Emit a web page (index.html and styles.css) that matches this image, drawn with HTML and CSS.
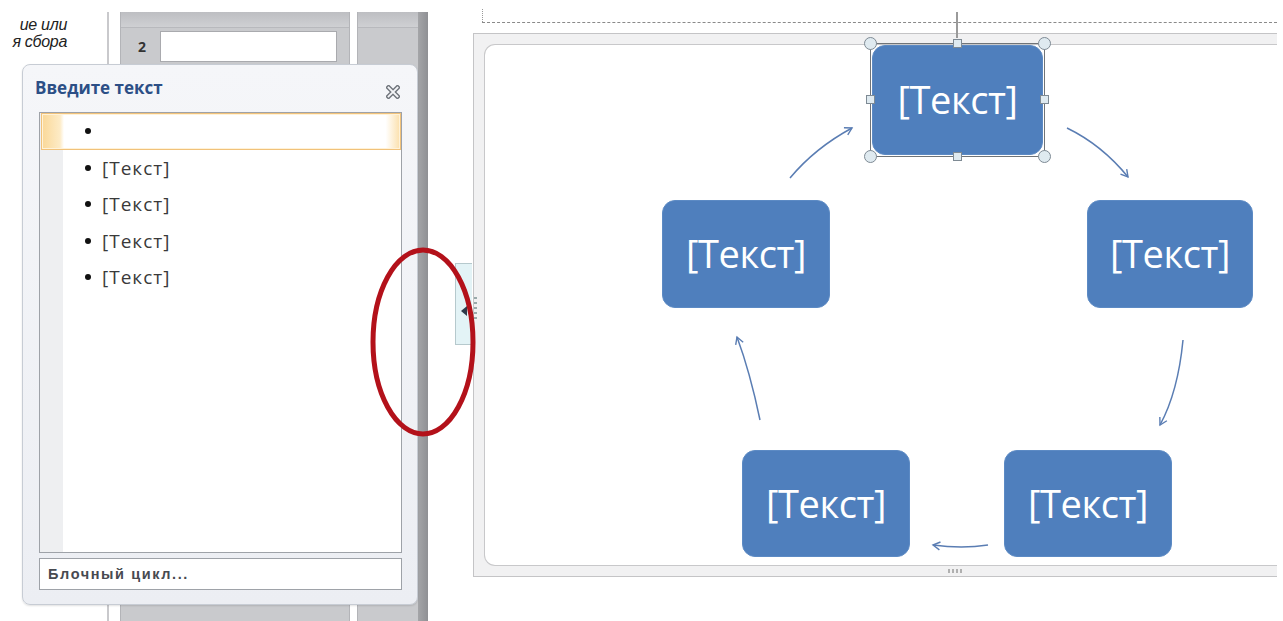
FILE: index.html
```html
<!DOCTYPE html>
<html lang="ru">
<head>
<meta charset="utf-8">
<title>SmartArt</title>
<link rel="stylesheet" href="styles.css">
</head>
<body>
<div class="page">
  <div class="left">
    <div class="snippet"><span>ие или</span><span>я сбора</span></div>
    <div class="col-line"></div>
    <div class="sheet">
      <div class="sheet-top"></div>
      <div class="sheet-row"><b class="num">2</b><div class="cell"></div></div>
    </div>
    <div class="sheet2"><div class="sheet-top"></div></div>
    <div class="scrollbar"></div>

    <div class="popup">
      <div class="popup-head">
        <span class="popup-title">Введите текст</span>
        <svg class="close" width="14" height="14" viewBox="0 0 14 14">
          <path d="M2.5 2.5 L11.5 11.5 M11.5 2.5 L2.5 11.5" stroke="#6f747b" stroke-width="4.6" stroke-linecap="square"/>
          <path d="M2.5 2.5 L11.5 11.5 M11.5 2.5 L2.5 11.5" stroke="#f4f5f8" stroke-width="1.8" stroke-linecap="square"/>
        </svg>
      </div>
      <div class="list">
        <div class="gutter"></div>
        <ul class="items">
          <li class="item active"><span class="dot"></span></li>
          <li class="item"><span class="dot"></span><span>[Текст]</span></li>
          <li class="item"><span class="dot"></span><span>[Текст]</span></li>
          <li class="item"><span class="dot"></span><span>[Текст]</span></li>
          <li class="item"><span class="dot"></span><span>[Текст]</span></li>
        </ul>
      </div>
      <div class="layout-name">Блочный цикл...</div>
    </div>
  </div>

  <div class="diagram">
    <div class="guide"></div>
    <div class="frame">
      <div class="canvas"></div>
    </div>
    <div class="rot-line"></div>
    <div class="grip-bottom"></div>
    <div class="grip-left"></div>

    <svg class="arrows" width="813" height="621" viewBox="0 0 813 621">
      <defs>
        <marker id="ah" markerWidth="10" markerHeight="10" refX="8" refY="5" orient="auto" markerUnits="userSpaceOnUse">
          <path d="M1 1 L8 5 L1 9" fill="none" stroke="#5a7db3" stroke-width="1.4"/>
        </marker>
      </defs>
      <g fill="none" stroke="#5a7db3" stroke-width="1.5" marker-end="url(#ah)">
        <path d="M320 178 Q345 148 382 128"/>
        <path d="M597 128 Q632 145 658 177"/>
        <path d="M713 340 Q708 392 690 425"/>
        <path d="M518 545 Q492 549 463 545"/>
        <path d="M290 420 Q280 372 267 337"/>
      </g>
    </svg>

    <div class="node n-top">[Текст]</div>
    <div class="node n-left">[Текст]</div>
    <div class="node n-right">[Текст]</div>
    <div class="node n-bl">[Текст]</div>
    <div class="node n-br">[Текст]</div>

    <div class="selection">
      <span class="h c tl"></span><span class="h c tr"></span>
      <span class="h c bl"></span><span class="h c br"></span>
      <span class="h s tm"></span><span class="h s bm"></span>
      <span class="h s ml"></span><span class="h s mr"></span>
    </div>
  </div>

  <div class="tab">
    <svg width="8" height="10" viewBox="0 0 8 10"><path d="M7 0 L7 10 L1 5 Z" fill="#2f3a4a"/></svg>
  </div>

  <svg class="annot" width="120" height="200" viewBox="0 0 120 200">
    <ellipse cx="60" cy="100" rx="50" ry="92" fill="none" stroke="#b3111a" stroke-width="5"/>
  </svg>
</div>
</body>
</html>
```

FILE: styles.css
```css
* { box-sizing: border-box; }

html, body {
  margin: 0;
  padding: 0;
  background: #ffffff;
}

.page {
  position: relative;
  width: 1283px;
  height: 621px;
  overflow: hidden;
  display: flex;
  font-family: "Open Sans", "Liberation Sans", sans-serif;
}

/* ---------- left: underlying sheet ---------- */
.left {
  position: relative;
  width: 470px;
  flex: none;
  display: flex;
  align-items: stretch;
}

.snippet {
  width: 66px;
  margin-left: 1px;
  margin-right: 40px;
  padding-top: 16px;
  display: flex;
  flex-direction: column;
  align-items: flex-end;
  font-family: "Liberation Sans", Arial, sans-serif;
  font-style: italic;
  font-size: 16px;
  line-height: 17px;
  letter-spacing: -0.3px;
  color: #222;
  white-space: nowrap;
}

.col-line {
  width: 2px;
  margin-top: 12px;
  background: #c9c9cc;
  margin-right: 11px;
}

.sheet {
  width: 230px;
  margin-top: 12px;
  background: #c9cacd;
  border-left: 1px solid #b3b4b8;
  border-right: 1px solid #b3b4b8;
}

.sheet-top {
  height: 16px;
  background: linear-gradient(#bdbec2, #cfd0d3);
  border-bottom: 1px solid #b8b9bd;
}

.sheet-row {
  display: flex;
  align-items: center;
  margin-top: 3px;
  padding-left: 17px;
}

.num {
  font-family: "Open Sans", sans-serif;
  font-size: 14px;
  font-weight: 700;
  color: #333;
  width: 22px;
}

.cell {
  width: 177px;
  height: 31px;
  background: #ffffff;
  border: 1px solid #a9aaae;
}

.sheet2 {
  width: 61px;
  margin-top: 12px;
  margin-left: 7px;
  background: #c9cacd;
  border-left: 1px solid #b3b4b8;
}

.scrollbar {
  width: 10px;
  margin-top: 12px;
  background: linear-gradient(90deg, #a4a5a8, #8f9094);
}

/* ---------- popup ---------- */
.popup {
  position: absolute;
  left: 22px;
  top: 64px;
  width: 396px;
  height: 541px;
  padding: 0 15px 0 16px;
  background: linear-gradient(#f5f6f9, #eceef3);
  border: 1px solid #c7ccd4;
  border-radius: 8px;
  box-shadow: 0 1px 2px rgba(0,0,0,0.12);
  display: flex;
  flex-direction: column;
}

.popup-head {
  height: 47px;
  display: flex;
  align-items: center;
  justify-content: space-between;
  padding-right: 2px;
}

.popup-title {
  margin-left: -4px;
  margin-top: -2px;
  font-size: 17px;
  font-weight: 700;
  color: #2c4f86;
  letter-spacing: 0;
}

.close { margin-top: 6px; }

.list {
  height: 441px;
  display: flex;
  background: #ffffff;
  border: 1px solid #9ea2a8;
  position: relative;
}

.gutter {
  position: absolute;
  left: 0;
  top: 0;
  bottom: 0;
  width: 23px;
  background: #eeeff1;
}

.items {
  position: relative;
  list-style: none;
  margin: 0;
  padding: 0;
  width: 100%;
}

.item {
  height: 36.5px;
  display: flex;
  align-items: center;
  padding-left: 45px;
  font-size: 19px;
  color: #3a3a3a;
  letter-spacing: 1px;
}

.item.active {
  margin: 0 0 0 1px;
  border: 1px solid #f1c27a;
  background: linear-gradient(90deg, #fad898 0, #fdebc6 18px, #ffffff 22px, #ffffff 96%, #fbe0ac 100%);
  padding-left: 43px;
  box-shadow: inset 0 0 0 1px #fff2d8;
}

.dot {
  width: 6px;
  height: 6px;
  border-radius: 50%;
  background: #111;
  margin-right: 11px;
  flex: none;
}

.layout-name {
  margin-top: 5px;
  height: 32px;
  display: flex;
  align-items: center;
  padding-left: 8px;
  background: #ffffff;
  border: 1px solid #9ea2a8;
  font-family: "Liberation Sans", Arial, sans-serif;
  font-size: 14.5px;
  font-weight: 700;
  letter-spacing: 1.6px;
  color: #474a50;
}

/* ---------- diagram ---------- */
.diagram {
  position: relative;
  flex: 1;
  display: flex;
  flex-direction: column;
}

.guide {
  height: 23px;
  margin-left: 12px;
  border-bottom: 1px dashed #8a8a8a;
  margin-top: 0;
  width: 795px;
  position: relative;
}

.guide::before {
  content: "";
  position: absolute;
  left: 0;
  top: 9px;
  height: 13px;
  border-left: 1px dotted #999;
}

.frame {
  margin-top: 10px;
  margin-left: 3px;
  width: 804px;
  height: 544px;
  padding: 10px 0 10px 10px;
  background: #f1f1f2;
  border: 1px solid #c4c4c6;
  border-right: none;
}

.canvas {
  height: 100%;
  background: #ffffff;
  border: 1px solid #c8c8ca;
  border-right: none;
  border-radius: 11px 0 0 11px;
}

.rot-line {
  position: absolute;
  left: 486px;
  top: 12px;
  width: 2px;
  height: 26px;
  background: #9a9a9a;
}

.grip-bottom {
  position: absolute;
  left: 478px;
  top: 569px;
  width: 16px;
  height: 4px;
  background: repeating-linear-gradient(90deg, #b0b0b0 0 2px, transparent 2px 4px);
}

.grip-left {
  position: absolute;
  left: 4px;
  top: 297px;
  width: 3px;
  height: 22px;
  background: repeating-linear-gradient(#9aa 0 2px, transparent 2px 5px);
}

.arrows {
  position: absolute;
  left: 0;
  top: 0;
}

.node {
  position: absolute;
  display: flex;
  align-items: center;
  justify-content: center;
  background: #4f7fbd;
  border: 1px solid #5c8ac4;
  border-radius: 13px;
  color: #ffffff;
  font-family: "Open Sans", sans-serif;
  font-size: 38px;
  letter-spacing: -0.4px;
  padding-bottom: 2px;
}

.n-top   { left: 402px; top: 45px;  width: 171px; height: 110px; }
.n-left  { left: 192px; top: 200px; width: 168px; height: 108px; }
.n-right { left: 617px; top: 200px; width: 166px; height: 108px; }
.n-bl    { left: 272px; top: 450px; width: 168px; height: 107px; }
.n-br    { left: 534px; top: 450px; width: 168px; height: 107px; }

.selection {
  position: absolute;
  left: 400px;
  top: 43px;
  width: 175px;
  height: 114px;
  border: 1px solid #707478;
}

.h {
  position: absolute;
  background: #dfeaf0;
  border: 1px solid #7e8a94;
}
.c { width: 13px; height: 13px; border-radius: 50%; }
.s { width: 9px; height: 9px; }

.tl { left: -7px;  top: -7px; }
.tr { right: -7px; top: -7px; }
.bl { left: -7px;  bottom: -7px; }
.br { right: -7px; bottom: -7px; }
.tm { left: 82px;  top: -5px; }
.bm { left: 82px;  bottom: -5px; }
.ml { left: -5px;  top: 51px; }
.mr { right: -5px; top: 51px; }

/* ---------- overlays ---------- */
.tab {
  position: absolute;
  left: 455px;
  top: 263px;
  width: 17px;
  height: 82px;
  background: #e3f3f6;
  border: 1px solid #b6c9cd;
  border-right: none;
  display: flex;
  align-items: flex-end;
  justify-content: center;
  padding-bottom: 28px;
}

.annot {
  position: absolute;
  left: 363px;
  top: 242px;
}
```
